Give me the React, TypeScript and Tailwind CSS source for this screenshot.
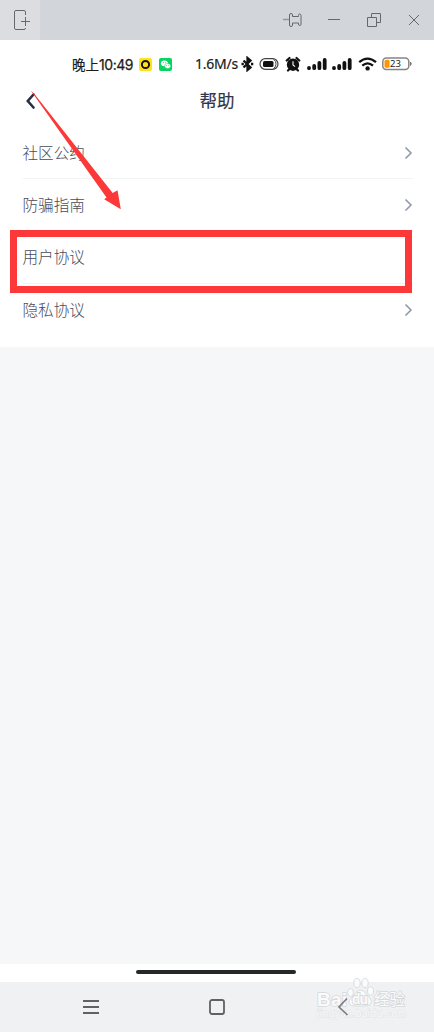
import { ReactNode } from 'react'

const rows = ['社区公约', '防骗指南', '用户协议', '隐私协议']

function TitleBar() {
  return (
    <div className="flex h-10 items-center bg-[#d2d5da] text-[#66686c]">
      <div className="flex h-10 w-10 items-center justify-center bg-[#dcdde1]">
        <svg width="40" height="40" fill="none" stroke="currentColor">
          <path d="M25.500 15v-3q0-1.500-1.500-1.500h-8q-1.500 0-1.500 1.500v16q0 1.500 1.500 1.500h8q1.500 0 1.500-1.500M21 21.500h9M25.500 17v9" />
        </svg>
      </div>
      <svg className="ml-auto" width="164" height="40" fill="none" stroke="currentColor">
        <path d="M13 19.500h6" stroke="#96989c" strokeWidth="1.500" />
        <path d="M19.500 15q0-1.500 1.500-1.500t1.500 1.500v1.500h6v-1q0-1.500 1-1.500 1.500 0 1.500 1.500v8.500q0 1.500-1.500 1.500-1 0-1-1.500v-1h-6v2q0 1.500-1.500 1.500t-1.500-1.500z" />
        <path d="M58 19.500h12" />
        <path d="M97.500 17.500h9v9h-9zM101.500 17v-3.500h9v9h-4" />
        <path d="M139 15l10 10M149 15l-10 10" />
      </svg>
    </div>
  )
}

function Signal() {
  return (
    <svg width="21" height="14" stroke="#111" strokeWidth="3.800" strokeLinecap="round">
      <path d="M2 11v.2M7.200 9v2.200M12.400 6v5.200M17.700 3v8.200" />
    </svg>
  )
}

function StatusBar() {
  return (
    <div className="flex h-12 items-center pl-[72px] text-[#1c1c1c]">
      <span className="flex w-[67px] items-center whitespace-nowrap">
        <span className="w-[27px] text-[13.500px] [-webkit-text-stroke:0.2px]">晚上</span>
        <span className="font-['Inter',sans-serif] text-[14px] tracking-[-0.450px] [-webkit-text-stroke:0.25px]">10:49</span>
      </span>
      <svg width="13" height="13">
        <rect width="13" height="13" rx="2" fill="#ffe21c" />
        <circle cx="6.500" cy="6.500" r="3.600" fill="none" stroke="#151515" strokeWidth="2" />
      </svg>
      <svg className="ml-[7px]" width="13" height="13">
        <rect width="13" height="13" rx="2" fill="#05d45f" />
        <ellipse cx="5.400" cy="5.300" rx="3.500" ry="2.900" fill="#fff" />
        <ellipse cx="8.600" cy="8" rx="3" ry="2.500" fill="#fff" stroke="#05d45f" strokeWidth=".5" />
        <path d="M4 4.700h.7M6.200 4.700h.7M7.400 7.500h.5M9.200 7.500h.5" stroke="#05a64a" strokeWidth=".8" />
      </svg>
      <span className="ml-[23px] w-[44px] whitespace-nowrap pb-px font-['Noto_Sans',sans-serif] text-[14px] tracking-[-0.250px] [-webkit-text-stroke:0.2px]">1.6M/s</span>
      <svg className="ml-[2px]" width="14" height="16" fill="none" stroke="#111" strokeWidth="2.300">
        <path d="M2.500 4.500l7 7L6.500 14v-12l3 2.500-7 7" />
        <path d="M.5 8h2.300M10 8h2.300" />
      </svg>
      <svg className="ml-[4px]" width="20" height="14" fill="none" stroke="#444">
        <rect x="1" y="1.700" width="18" height="10.600" rx="5.300" strokeWidth="1.200" />
        <path d="M14.500 2.300q3 2 2.500 5t-2.500 4.500" />
        <rect x="4" y="4" width="10.500" height="6" rx="1.500" fill="#111" stroke="none" />
      </svg>
      <svg className="ml-[6px]" width="16" height="16">
        <circle cx="8" cy="8.700" r="6.200" fill="#111" />
        <path d="M1.700 4.500l2.800-2.500M14.300 4.500l-2.800-2.500M4 13.500l-1 1M12 13.500l1 1" stroke="#111" strokeWidth="2.200" strokeLinecap="round" />
        <path d="M8 5.200v3.800l2 1.600" fill="none" stroke="#fff" strokeWidth="1.100" />
      </svg>
      <span className="ml-[6px] flex gap-[4px]">
        <Signal />
        <Signal />
      </span>
      <svg className="ml-[5px]" width="20" height="16" fill="none" stroke="#111" strokeWidth="2.300">
        <path d="M1.200 6.200q8.300-7.200 16.800 0M4.300 9.700q5.300-4.600 10.700 0" />
        <circle cx="9.600" cy="12.400" r="2.200" fill="#111" stroke="none" />
      </svg>
      <svg className="ml-[4px]" width="31" height="14">
        <rect x=".8" y="1" width="26" height="11.500" rx="3.500" fill="#fff" stroke="#858585" strokeWidth="1.500" />
        <path d="M28.500 5v3.500q1.500-1.700 0-3.500" fill="#777" stroke="#777" />
        <rect x="2.500" y="2.700" width="5" height="8" rx="1.500" fill="#ff9500" />
        <text x="8" y="10.200" fontSize="9.500" textLength="11" fontFamily="Noto Sans, sans-serif" fill="#222">23</text>
      </svg>
    </div>
  )
}

function Row({ children }: { children: ReactNode }) {
  return (
    <div className="flex h-[52.300px] items-center justify-between border-b border-[#f3f3f4] last:border-0">
      <span className="text-[15.600px] font-light leading-none text-[#484c5a]">{children}</span>
      <svg width="9" height="14" fill="none" stroke="#9298ac" strokeWidth="1.600">
        <path d="M1.500 1.500L7 7l-5.500 5.500" />
      </svg>
    </div>
  )
}

function Watermark() {
  return (
    <svg className="absolute left-[310px] top-[974px]" width="104" height="50" fontFamily="Liberation Sans, Noto Sans CJK SC, sans-serif">
      <g fill="#fafbfb" stroke="#d6d8da" strokeWidth=".9">
        <ellipse cx="40.500" cy="18.500" rx="2.900" ry="4" />
        <ellipse cx="47" cy="9" rx="3.200" ry="4.500" />
        <ellipse cx="55" cy="9" rx="3.200" ry="4.500" />
        <ellipse cx="60.500" cy="17" rx="3" ry="4.200" />
        <path d="M50 16q4 0 6 4l4 4q3 4 0 7-2 1-6 1H45q-6 0-6-4 0-2 5-7 3-5 6-5z" />
      </g>
      <g fill="#fafbfb" stroke="#d6d8db" strokeWidth="1.500" paintOrder="stroke">
        <text x="7" y="31.500" fontSize="19" fontWeight="700" textLength="30">Bai</text>
        <text x="42" y="29.500" fontSize="14" fontWeight="700" textLength="16" strokeWidth="1.800">du</text>
        <text x="64" y="30.500" fontSize="15.500" textLength="31">经验</text>
        <text x="7" y="43" fontSize="10" textLength="89" strokeWidth="1" stroke="#e1e3e5">jingyan.baidu.com</text>
      </g>
      {/* back chevron shows through the mark */}
      <path d="M37 24.500L29 33l8.500 8" fill="none" stroke="#606164" strokeWidth="1.700" opacity=".8" />
    </svg>
  )
}

export default function App() {
  return (
    <div className="relative flex h-[1032px] w-[434px] flex-col overflow-hidden bg-white font-['Noto_Sans_CJK_SC',sans-serif]">
      <TitleBar />
      <StatusBar />
      <header className="grid h-[39px] grid-cols-[1fr_auto_1fr] items-start pt-[3px]">
        <svg className="ml-[25px] mt-px" width="12" height="18" fill="none" stroke="#292e44" strokeWidth="2.600" strokeLinecap="round">
          <path d="M8.500 2.500L2.800 9l5.700 6.500" />
        </svg>
        <h1 className="text-[17.500px] font-normal leading-[18px] text-[#30354a] [-webkit-text-stroke:0.15px]">帮助</h1>
      </header>
      <main className="flex h-[220px] flex-col pl-[22.500px] pr-[21px]">
        {rows.map(r => <Row key={r}>{r}</Row>)}
      </main>
      <div className="h-[617px] bg-[#f6f7f9]" />
      <div className="flex h-[18px] bg-white pl-[136px] pt-[6px]">
        <div className="h-1 w-40 rounded-full bg-[#252826]" />
      </div>
      <nav className="flex h-[50px] items-center bg-[#f0f1f3]">
        <svg className="ml-[83px]" width="16" height="16" stroke="#606164" strokeWidth="1.800">
          <path d="M0 2h16M0 8h16M0 14h16" />
        </svg>
        <svg className="ml-[110px]" width="16" height="16" fill="none" stroke="#606164" strokeWidth="1.800">
          <rect x="1" y="1" width="14" height="14" rx="2" />
        </svg>
      </nav>
      <div className="absolute left-[10px] top-[230px] h-[63px] w-[402px] border-[7px] border-[#fd3838]" />
      <div className="absolute left-[390px] top-[245px] h-6 w-[15px] bg-white" />
      <svg className="absolute left-0 top-[80px]" width="140" height="140">
        <path d="M30.700 10.500L106.500 117.500l-2.300 1.800 16.600 10-3.300-19-4.800 2.700L34 13.500z" fill="#fd3838" />
      </svg>
      <Watermark />
    </div>
  )
}
